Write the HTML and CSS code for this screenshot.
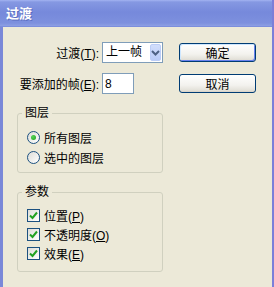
FILE: index.html
```html
<!DOCTYPE html>
<html lang="zh-CN">
<head>
    <meta charset="UTF-8">
    <meta name="viewport" content="width=device-width, initial-scale=1.0">
    <title>过渡</title>
    <link rel="stylesheet" href="styles.css">
</head>
<body>

<div class="window">
    <div class="titlebar">过渡</div>

    <div class="client">
        <div class="main">
            <div class="form-grid">
                <label class="field-label">过渡(<u>T</u>):</label>
                <div class="combo">
                    <span class="combo-text">上一帧</span>
                    <span class="combo-btn">
                        <svg width="9" height="6" viewBox="0 0 9 6"><path d="M1 1 L4.5 4.5 L8 1" fill="none" stroke="#4d6185" stroke-width="2"/></svg>
                    </span>
                </div>

                <label class="field-label" for="frames">要添加的帧(<u>E</u>):</label>
                <input class="text-input" id="frames" type="text" value="8">
            </div>

            <fieldset class="group group-layers">
                <legend>图层</legend>
                <div class="option"><span class="radio checked"></span><span>所有图层</span></div>
                <div class="option"><span class="radio"></span><span>选中的图层</span></div>
            </fieldset>

            <fieldset class="group group-params">
                <legend>参数</legend>
                <div class="option check-row"><span class="checkbox"><svg width="9" height="9" viewBox="0 0 9 9"><path d="M1 4.5 L3.5 7 L8 1.5" fill="none" stroke="#21a121" stroke-width="2"/></svg></span><span>位置(<u>P</u>)</span></div>
                <div class="option check-row"><span class="checkbox"><svg width="9" height="9" viewBox="0 0 9 9"><path d="M1 4.5 L3.5 7 L8 1.5" fill="none" stroke="#21a121" stroke-width="2"/></svg></span><span>不透明度(<u>O</u>)</span></div>
                <div class="option check-row"><span class="checkbox"><svg width="9" height="9" viewBox="0 0 9 9"><path d="M1 4.5 L3.5 7 L8 1.5" fill="none" stroke="#21a121" stroke-width="2"/></svg></span><span>效果(<u>E</u>)</span></div>
            </fieldset>
        </div>

        <div class="actions">
            <button class="button default">确定</button>
            <button class="button">取消</button>
        </div>
    </div>
</div>

</body>
</html>
```

FILE: styles.css
```css
* {
    margin: 0;
    padding: 0;
    box-sizing: border-box;
    font-family: "Liberation Sans", "Noto Sans CJK SC", sans-serif;
}

body {
    width: 274px;
    height: 287px;
    overflow: hidden;
    background-color: #ece9d8;
}

.window {
    width: 274px;
    height: 287px;
    display: flex;
    flex-direction: column;
}

.titlebar {
    height: 27px;
    flex: none;
    padding-left: 6px;
    line-height: 27px;
    font-size: 13px;
    font-weight: bold;
    color: #ffffff;
    text-shadow: 1px 1px 0 #5a6cbf;
    background: linear-gradient(#a3b3f1 0, #8598e2 2px, #7689db 45%, #7d90de 85%, #8b9de3 95%, #7285d8 100%);
    border-right: 2px solid #7b7fd8;
}

.client {
    flex: 1;
    display: flex;
    background-color: #ece9d8;
    border-left: 3px solid #7a88d8;
    border-right: 2px solid #7c7fd9;
    padding: 15px 0 0 13px;
    font-size: 12px;
    color: #000000;
}

.main {
    width: 147px;
}

.form-grid {
    display: grid;
    grid-template-columns: 83px auto;
    grid-auto-rows: 21px;
    column-gap: 3px;
    row-gap: 10px;
    align-items: center;
}

.field-label {
    text-align: right;
    white-space: nowrap;
    font-size: 12px;
}

.combo {
    width: 61px;
    height: 21px;
    display: flex;
    align-items: stretch;
    background-color: #ffffff;
    border: 1px solid #7f9db9;
}

.combo-text {
    flex: 1;
    padding-left: 3px;
    line-height: 19px;
    white-space: nowrap;
}

.combo-btn {
    width: 11px;
    display: flex;
    align-items: center;
    justify-content: center;
    margin: 1px 1px 1px 0;
    border: 1px solid #bccdf7;
    border-radius: 2px;
    background: linear-gradient(#d2defc, #b9cbf8);
}

.text-input {
    width: 32px;
    height: 21px;
    border: 1px solid #7f9db9;
    background-color: #ffffff;
    padding-left: 2px;
    font-size: 12px;
    outline: none;
}

.group {
    width: 146px;
    min-width: 0;
    margin-left: 1px;
    border: 1px solid #d0d0bf;
    border-radius: 3px;
    padding: 7px 0 5px 9px;
}

.group-layers {
    margin-top: 12px;
}

.group-params {
    margin-top: 12px;
    padding-bottom: 8px;
}

.group legend {
    margin-left: -5px;
    padding: 0 3px;
    line-height: 14px;
    font-size: 12px;
}

.option {
    height: 20px;
    display: flex;
    align-items: center;
    gap: 4px;
    white-space: nowrap;
}

.check-row {
    height: 19px;
}

.radio {
    width: 13px;
    height: 13px;
    flex: none;
    border: 1px solid #1c5180;
    border-radius: 50%;
    background: linear-gradient(135deg, #dcdcd7, #ffffff);
    display: flex;
    align-items: center;
    justify-content: center;
}

.radio.checked::after {
    content: "";
    width: 5px;
    height: 5px;
    border-radius: 50%;
    background: radial-gradient(circle at 35% 35%, #55d455, #21a121);
}

.checkbox {
    width: 13px;
    height: 13px;
    flex: none;
    border: 1px solid #1c5180;
    background: linear-gradient(135deg, #dcdcd7, #ffffff);
    display: flex;
    align-items: center;
    justify-content: center;
}

.actions {
    margin-left: 16px;
    padding-top: 1px;
    display: flex;
    flex-direction: column;
    gap: 12px;
}

.button {
    width: 77px;
    height: 19px;
    border: 1px solid #003c74;
    border-radius: 3px;
    background: linear-gradient(#ffffff, #f3f2ee 60%, #e3e1d9 90%, #d6d0c5);
    font-size: 12px;
    color: #000000;
    cursor: pointer;
}

.button.default {
    box-shadow: inset 1px 1px 0 #cee7ff, inset -1px -1px 0 #6982ee;
}
```
